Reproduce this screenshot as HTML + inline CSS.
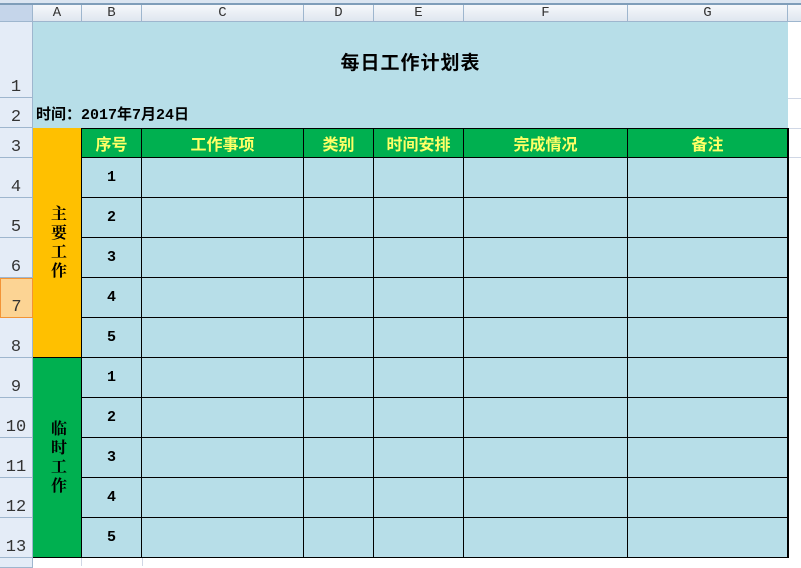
<!DOCTYPE html>
<html><head><meta charset="utf-8"><style>
*{margin:0;padding:0;box-sizing:border-box}
body{width:801px;height:566px;overflow:hidden;background:#fff;position:relative;font-family:"Liberation Sans","Noto Sans CJK SC",sans-serif}
.a{position:absolute}
.ch{position:absolute;top:5px;height:17px;background:linear-gradient(#f6f8fb,#dfe6ef);border-right:1px solid #9eb6ce;border-bottom:1px solid #9eb6ce;font:14px "Liberation Mono","Noto Sans CJK SC",monospace;color:#333;text-align:center;line-height:17px}
.rh{position:absolute;left:0;width:33px;background:#e4ecf7;border-bottom:1px solid #9eb6ce;border-right:1px solid #9eb6ce;font:17px "Liberation Mono",monospace;color:#333;text-align:center;display:flex;align-items:flex-end;justify-content:center;padding-bottom:0}
.c{position:absolute;display:flex;align-items:center;justify-content:center;font-weight:bold}
.h{background:#00b050;color:#ffff66;font-size:16px}
.n{background:#b7dee8;color:#000;font-size:15px;font-family:"Liberation Mono","Noto Serif CJK SC",monospace}
.v{writing-mode:vertical-rl;text-orientation:upright;font-size:16px;letter-spacing:3px;font-family:"Liberation Sans","Noto Serif CJK SC",serif}
</style></head><body>
<div class="a" style="left:0;top:0;width:801px;height:5px;background:#dbe5f1;border-bottom:2px solid #7f9db9"></div>
<div class="ch" style="left:0;width:33px;background:#c5d5ea"></div>
<div class="ch" style="left:33px;width:49px">A</div>
<div class="ch" style="left:82px;width:60px">B</div>
<div class="ch" style="left:142px;width:162px">C</div>
<div class="ch" style="left:304px;width:70px">D</div>
<div class="ch" style="left:374px;width:90px">E</div>
<div class="ch" style="left:464px;width:164px">F</div>
<div class="ch" style="left:628px;width:160px">G</div>
<div class="ch" style="left:788px;width:13px;border-right:none"></div>
<div class="rh" style="top:22px;height:76px">1</div>
<div class="rh" style="top:98px;height:30px">2</div>
<div class="rh" style="top:128px;height:30px">3</div>
<div class="rh" style="top:158px;height:40px">4</div>
<div class="rh" style="top:198px;height:40px">5</div>
<div class="rh" style="top:238px;height:40px">6</div>
<div class="rh" style="top:278px;height:40px;background:#fcd494;border:1px solid #f29436">7</div>
<div class="rh" style="top:318px;height:40px">8</div>
<div class="rh" style="top:358px;height:40px">9</div>
<div class="rh" style="top:398px;height:40px">10</div>
<div class="rh" style="top:438px;height:40px">11</div>
<div class="rh" style="top:478px;height:40px">12</div>
<div class="rh" style="top:518px;height:40px">13</div>
<div class="rh" style="top:558px;height:10px"></div>
<div class="a" style="left:33px;top:22px;width:755px;height:106px;background:#b7dee8"></div>
<div class="a" style="left:33px;top:48px;width:755px;text-align:center;font-size:19px;font-weight:bold;letter-spacing:1px;font-family:'Liberation Sans','Noto Sans CJK SC',sans-serif">每日工作计划表</div>
<div class="a" style="left:36px;top:103px;font-size:15px;font-weight:bold;font-family:'Liberation Mono','Noto Sans CJK SC',monospace">时间：2017年7月24日</div>
<div class="a" style="left:788px;top:98px;width:13px;height:1px;background:#d0d7e5"></div>
<div class="a" style="left:788px;top:128px;width:13px;height:1px;background:#d0d7e5"></div>
<div class="a" style="left:788px;top:157px;width:13px;height:1px;background:#d0d7e5"></div>
<div class="a" style="left:142px;top:558px;width:1px;height:8px;background:#d0d7e5"></div>
<div class="a" style="left:81px;top:558px;width:1px;height:8px;background:#d0d7e5"></div>
<div class="a" style="left:33px;top:128px;width:756px;height:430px;background:#000"></div>
<div class="c v" style="left:33px;top:128px;width:48px;height:229px;background:#ffc000;color:#000">主要工作</div>
<div class="c v" style="left:33px;top:358px;width:48px;height:199px;background:#00b050;color:#000">临时工作</div>
<div id="g"></div>
<script>
var cols=[81,141,303,373,463,627,787],hd=["序号","工作事项","类别","时间安排","完成情况","备注"],s="";
for(var i=0;i<6;i++){var x=cols[i]+1,w=cols[i+1]-cols[i]-1;
s+='<div class="c h" style="left:'+x+'px;top:129px;width:'+w+'px;height:28px">'+hd[i]+'</div>';
for(var r=0;r<10;r++){s+='<div class="c n" style="left:'+x+'px;top:'+(158+r*40)+'px;width:'+w+'px;height:39px">'+(i==0?(r%5+1):'')+'</div>';}}
document.getElementById('g').innerHTML=s;
</script>
</body></html>
